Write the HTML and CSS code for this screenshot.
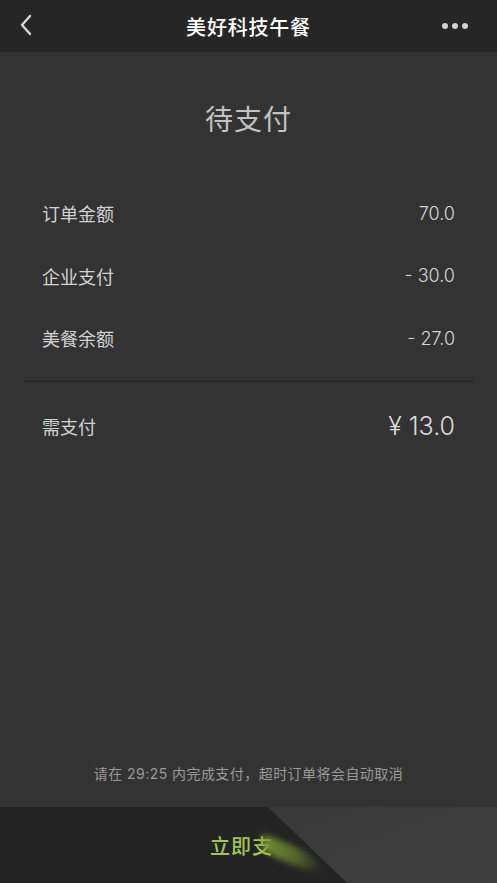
FILE: index.html
```html
<!DOCTYPE html>
<html lang="zh-CN">
<head>
<meta charset="utf-8">
<title>美好科技午餐</title>
<link rel="stylesheet" href="styles.css">
</head>
<body>
<div class="app">
  <header class="nav">
    <span class="nav-back">
      <svg width="14" height="22" viewBox="0 0 14 22"><path d="M11 2 L3 11 L11 20" fill="none" stroke="#d8d8d8" stroke-width="2.4" stroke-linecap="round" stroke-linejoin="round"/></svg>
    </span>
    <h1 class="nav-title">美好科技午餐</h1>
    <span class="nav-more"><i></i><i></i><i></i></span>
  </header>
  <main class="content">
    <div class="status">待支付</div>
    <ul class="lines">
      <li class="line"><span>订单金额</span><span class="num">70.0</span></li>
      <li class="line"><span>企业支付</span><span class="num">- 30.0</span></li>
      <li class="line"><span>美餐余额</span><span class="num">- 27.0</span></li>
    </ul>
    <div class="divider"></div>
    <div class="total"><span>需支付</span><span class="total-num">¥ 13.0</span></div>
    <p class="note">请在 29:25 内完成支付，超时订单将会自动取消</p>
  </main>
  <footer class="paybar">
    <span class="pay-text">立即支</span>
    <span class="streak"></span>
  </footer>
</div>
</body>
</html>
```
FILE: styles.css
```css
* { box-sizing: border-box; }
html, body { margin: 0; padding: 0; }
body {
  background: #333333;
  font-family: "Inter", "Noto Sans CJK SC", sans-serif;
  color: #d0d0d0;
}
.app {
  width: 497px;
  height: 883px;
  display: flex;
  flex-direction: column;
  overflow: hidden;
}
.nav {
  height: 52px;
  flex: none;
  background: #262626;
  display: grid;
  grid-template-columns: 1fr auto 1fr;
  align-items: center;
  padding: 0 29px 0 29px;
}
.nav-back { width: 14px; height: 22px; display: flex; margin-top: -2px; margin-left: -10px; }
.nav-title {
  margin: 0;
  font-family: "Noto Sans CJK SC", sans-serif;
  font-size: 20px;
  font-weight: 500;
  color: #ffffff;
  letter-spacing: 0.8px;
}
.nav-more { display: flex; gap: 4px; align-items: center; justify-self: end; }
.nav-more i {
  width: 6px; height: 6px; border-radius: 50%; background: #d4d4d4; display: block;
}
.content {
  flex: 1;
  display: flex;
  flex-direction: column;
  padding: 0 24px;
}
.status {
  margin-top: 46px;
  text-align: center;
  font-family: "Noto Sans CJK SC", sans-serif;
  font-size: 28px;
  line-height: 40px;
  color: #c2c2c2;
  letter-spacing: 1px;
}
.lines { list-style: none; margin: 44px 0 0; padding: 0; }
.line {
  height: 62.5px;
  display: flex;
  align-items: center;
  justify-content: space-between;
  padding: 0 18px 0 18px;
  font-size: 18px;
  color: #d2d2d2;
}
.num { font-size: 18px; font-weight: 300; color: #d6d6d6; }
.divider { height: 1px; background: #222222; margin-top: 11px; }
.total {
  height: 88px;
  display: flex;
  align-items: center;
  justify-content: space-between;
  padding: 0 18px 0 18px;
  font-size: 18px;
  color: #d2d2d2;
}
.total-num { font-size: 25px; font-weight: 300; color: #dcdcdc; }
.note {
  margin: auto 0 0;
  padding-bottom: 23px;
  text-align: center;
  font-size: 14px;
  line-height: 20px;
  letter-spacing: 0.45px;
  color: #9a9a9a;
}
.paybar {
  height: 76px;
  flex: none;
  position: relative;
  background: linear-gradient(160deg, #363636 0%, #3b3b3b 60%, #3f3f3f 100%);
  display: flex;
  align-items: center;
  padding-left: 210px;
}
.paybar::before {
  content: "";
  position: absolute;
  inset: 0;
  background: #232323;
  clip-path: polygon(0 0, 268px 0, 347px 100%, 0 100%);
}
.pay-text {
  position: relative;
  font-family: "Noto Sans CJK SC", sans-serif;
  font-size: 20px;
  font-weight: 500;
  color: #a4c554;
  letter-spacing: 1px;
  margin-top: 1px;
}
.streak {
  position: absolute;
  left: 262px;
  top: 26px;
  width: 60px;
  height: 19px;
  background: linear-gradient(90deg, rgba(125,155,55,0.9) 0%, rgba(110,140,45,0.65) 55%, rgba(100,130,40,0) 100%);
  border-radius: 30% 60% 60% 30%;
  transform: skewY(22deg);
  transform-origin: left center;
  filter: blur(3px);
}
```
